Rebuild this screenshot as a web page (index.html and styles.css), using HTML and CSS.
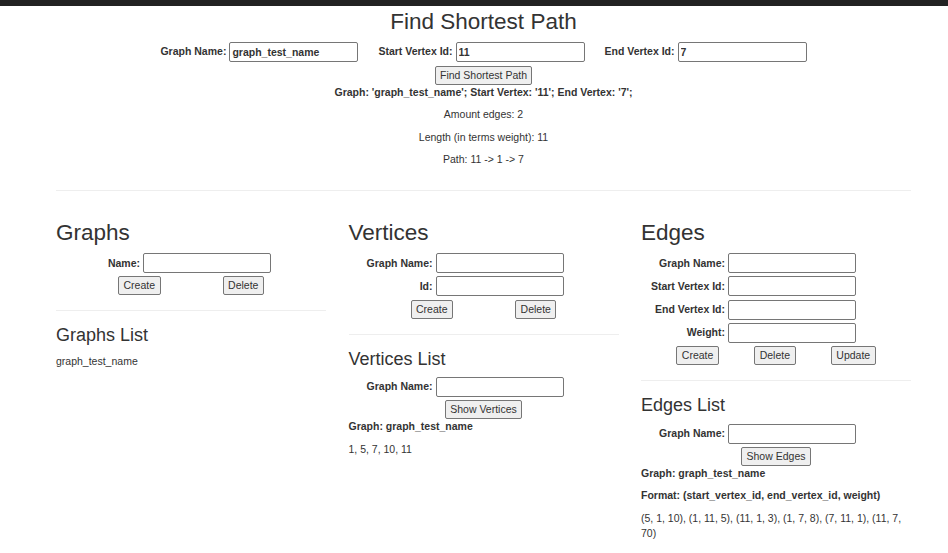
FILE: index.html
```html
<!DOCTYPE html>
<html lang="en">
<head>
<meta charset="utf-8">
<title>Find Shortest Path</title>
<link rel="stylesheet" href="styles.css">
</head>
<body>
<div class="topbar"></div>
<div class="container">
  <section class="finder">
    <h1 class="finder-title">Find Shortest Path</h1>
    <div class="finder-form">
      <label class="inline-field">Graph Name: <input class="text-input wide" type="text" value="graph_test_name"></label>
      <label class="inline-field">Start Vertex Id: <input class="text-input wide" type="text" value="11"></label>
      <label class="inline-field">End Vertex Id: <input class="text-input wide" type="text" value="7"></label>
    </div>
    <div class="finder-actions"><button class="btn" type="button">Find Shortest Path</button></div>
    <p class="text strong">Graph: 'graph_test_name'; Start Vertex: '11'; End Vertex: '7';</p>
    <p class="text">Amount edges: 2</p>
    <p class="text">Length (in terms weight): 11</p>
    <p class="text">Path: 11 -&gt; 1 -&gt; 7</p>
  </section>
  <hr class="divider">
  <div class="columns">
    <section class="column">
      <h2 class="section-title">Graphs</h2>
      <div class="form">
        <label class="field"><span class="field-label">Name:</span><input class="text-input" type="text"></label>
        <div class="actions">
          <button class="btn" type="button">Create</button>
          <button class="btn" type="button">Delete</button>
        </div>
      </div>
      <hr class="divider">
      <h3 class="subsection-title">Graphs List</h3>
      <p class="text">graph_test_name</p>
    </section>
    <section class="column">
      <h2 class="section-title">Vertices</h2>
      <div class="form">
        <label class="field"><span class="field-label">Graph Name:</span><input class="text-input" type="text"></label>
        <label class="field"><span class="field-label">Id:</span><input class="text-input" type="text"></label>
        <div class="actions">
          <button class="btn" type="button">Create</button>
          <button class="btn" type="button">Delete</button>
        </div>
      </div>
      <hr class="divider">
      <h3 class="subsection-title">Vertices List</h3>
      <div class="form">
        <label class="field"><span class="field-label">Graph Name:</span><input class="text-input" type="text"></label>
        <div class="actions">
          <button class="btn" type="button">Show Vertices</button>
        </div>
      </div>
      <p class="text strong">Graph: graph_test_name</p>
      <p class="text">1, 5, 7, 10, 11</p>
    </section>
    <section class="column">
      <h2 class="section-title">Edges</h2>
      <div class="form">
        <label class="field"><span class="field-label">Graph Name:</span><input class="text-input" type="text"></label>
        <label class="field"><span class="field-label">Start Vertex Id:</span><input class="text-input" type="text"></label>
        <label class="field"><span class="field-label">End Vertex Id:</span><input class="text-input" type="text"></label>
        <label class="field"><span class="field-label">Weight:</span><input class="text-input" type="text"></label>
        <div class="actions">
          <button class="btn" type="button">Create</button>
          <button class="btn" type="button">Delete</button>
          <button class="btn" type="button">Update</button>
        </div>
      </div>
      <hr class="divider">
      <h3 class="subsection-title">Edges List</h3>
      <div class="form">
        <label class="field"><span class="field-label">Graph Name:</span><input class="text-input" type="text"></label>
        <div class="actions">
          <button class="btn" type="button">Show Edges</button>
        </div>
      </div>
      <p class="text strong">Graph: graph_test_name</p>
      <p class="text strong">Format: (start_vertex_id, end_vertex_id, weight)</p>
      <p class="text">(5, 1, 10), (1, 11, 5), (11, 1, 3), (1, 7, 8), (7, 11, 1), (11, 7, 70)</p>
    </section>
  </div>
</div>
</body>
</html>
```

FILE: styles.css
```css
* {
  box-sizing: border-box;
}

html,
body {
  margin: 0;
}

body {
  font-family: "Liberation Sans", Arial, sans-serif;
  font-size: 10.5px;
  line-height: 15px;
  color: #333;
  background: #fff;
}

.topbar {
  height: 6px;
  background: #222;
}

.container {
  width: 877.5px;
  margin-left: 44.75px;
  padding: 0 11.25px;
}

.finder {
  display: flow-root;
  text-align: center;
}

.finder-title {
  font-size: 22.5px;
  line-height: 1.1;
  font-weight: 500;
  margin: 3.5px 0 7.5px;
}

.finder-form {
  display: flex;
  justify-content: center;
  gap: 20px;
}

.inline-field {
  display: flex;
  align-items: center;
  gap: 3px;
  font-weight: bold;
}

.text-input {
  width: 128px;
  height: 20px;
  margin: 0;
  border: 1px solid #767676;
  border-radius: 2px;
  padding: 0 2px;
  font: inherit;
  color: inherit;
  background: #fff;
}

.text-input.wide {
  width: 129px;
}

.btn {
  height: 19px;
  margin: 0;
  padding: 0 4.5px;
  border: 1px solid #767676;
  border-radius: 2px;
  background: #efefef;
  font: inherit;
  line-height: 15px;
  color: inherit;
}

.finder-actions {
  margin-top: 4px;
  display: flex;
  justify-content: center;
}

.text {
  margin: 0 0 7.5px;
}

.strong {
  font-weight: bold;
}

.divider {
  height: 0;
  border: 0;
  border-top: 1px solid #eee;
  margin: 15px 0;
}

.columns {
  display: grid;
  grid-template-columns: repeat(3, 292.5px);
  margin: 0 -11.25px;
}

.column {
  padding: 0 11.25px;
}

.section-title {
  font-size: 22.5px;
  line-height: 1.1;
  font-weight: 500;
  margin: 15px 0 7.5px;
}

.subsection-title {
  font-size: 18px;
  line-height: 1.1;
  font-weight: 500;
  margin: 15px 0 7.5px;
}

.form {
  display: flex;
  flex-direction: column;
  gap: 3.33px;
}

.field {
  display: grid;
  grid-template-columns: 84px 128px;
  column-gap: 3px;
  align-items: center;
  font-weight: bold;
}

.field-label {
  text-align: right;
}

.actions {
  display: flex;
  justify-content: space-evenly;
}
```
